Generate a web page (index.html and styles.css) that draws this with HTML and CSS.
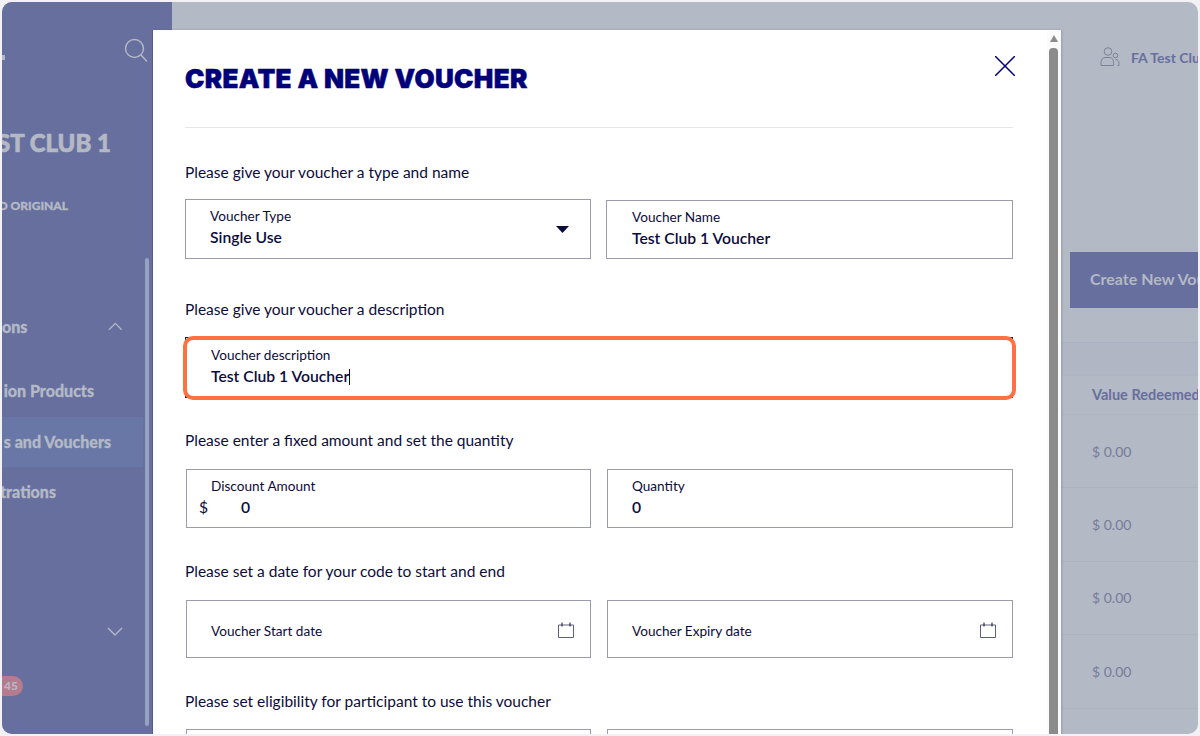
FILE: index.html
```html
<!DOCTYPE html>
<html lang="en">
<head>
<meta charset="utf-8">
<title>Create a new voucher</title>
<link rel="stylesheet" href="styles.css">
</head>
<body>
<div class="frame">
  <aside class="sidebar">
    <span class="logo-bit"></span>
    <div class="side-top">
      <svg class="search" viewBox="0 0 24 24" width="24" height="24" fill="none" stroke="#b3b9c5" stroke-width="1.4"><circle cx="10.500" cy="10.500" r="9"/><path d="M17 17l6 6.500"/></svg>
    </div>
    <div class="side-row club">ST CLUB 1</div>
    <div class="side-row plan">O ORIGINAL</div>
    <div class="side-row group"><span>ons</span>
      <svg class="chev" viewBox="0 0 16 9" width="16" height="9" fill="none" stroke="#b3b9c5" stroke-width="1.4"><path d="M1 8l7-7 7 7"/></svg>
    </div>
    <div class="side-row item prod">ion Products</div>
    <div class="side-row item active">s and Vouchers</div>
    <div class="side-row item reg">trations</div>
    <div class="side-row group lower">
      <svg class="chev" viewBox="0 0 16 9" width="16" height="9" fill="none" stroke="#b3b9c5" stroke-width="1.4"><path d="M1 1l7 7 7-7"/></svg>
    </div>
    <div class="side-row badge-row"><span class="badge">45</span></div>
    <div class="side-scroll"></div>
  </aside>

  <main class="main">
    <div class="topbar">
      <svg class="user" viewBox="0 0 20 20" width="20" height="20" fill="none" stroke="#7d8296" stroke-width="1"><circle cx="8" cy="4.500" r="3.800"/><circle cx="15.500" cy="8.500" r="2.300"/><path d="M1 18.500v-3c0-3 2-5 4-5h5c2 0 3.500 2 3.500 5v3z"/><path d="M15.500 12.500c2 0 3.500 1.500 3.500 3.500v2.500h-1.500"/></svg>
      <span class="user-name">FA Test Club 1</span>
    </div>
    <div class="actions"><button class="create">Create New Voucher</button></div>
    <div class="band"></div>
    <div class="thead">Value Redeemed</div>
    <div class="trow">$ 0.00</div>
    <div class="trow">$ 0.00</div>
    <div class="trow">$ 0.00</div>
    <div class="trow">$ 0.00</div>
  </main>

  <section class="modal">
    <div class="modal-body">
      <header class="modal-head">
        <h1 class="title">CREATE A NEW VOUCHER</h1>
        <svg class="close" viewBox="0 0 20 20" width="20" height="20" fill="none" stroke="#00007a" stroke-width="1.500"><path d="M0 0l20 20M20 0L0 20"/></svg>
      </header>

      <p class="label first">Please give your voucher a type and name</p>
      <div class="grid">
        <div class="field select">
          <span class="f-label">Voucher Type</span>
          <span class="f-value">Single Use</span>
          <svg class="arrow" viewBox="0 0 13 7" width="13" height="7"><path d="M0 0h13L6.500 7z" fill="#0c0c3c"/></svg>
        </div>
        <div class="field name">
          <span class="f-label">Voucher Name</span>
          <span class="f-value">Test Club 1 Voucher</span>
        </div>
      </div>

      <p class="label second">Please give your voucher a description</p>
      <div class="field focus">
        <span class="f-label">Voucher description</span>
        <span class="f-value">Test Club 1 Voucher<i class="caret"></i></span>
      </div>

      <p class="label third">Please enter a fixed amount and set the quantity</p>
      <div class="grid">
        <div class="field money">
          <span class="f-label">Discount Amount</span>
          <span class="f-value"><span class="dollar">$</span>0</span>
        </div>
        <div class="field">
          <span class="f-label">Quantity</span>
          <span class="f-value">0</span>
        </div>
      </div>

      <p class="label">Please set a date for your code to start and end</p>
      <div class="grid">
        <div class="field date">
          <span class="f-label">Voucher Start date</span>
          <svg class="cal" viewBox="0 0 16 16" width="16" height="16" fill="none" stroke="#5d6078"><path d="M.5 3h15v12.500H.5z"/><path d="M4 .5v4M12 .5v4" stroke="#0c0c3c"/></svg>
        </div>
        <div class="field date">
          <span class="f-label">Voucher Expiry date</span>
          <svg class="cal" viewBox="0 0 16 16" width="16" height="16" fill="none" stroke="#5d6078"><path d="M.5 3h15v12.500H.5z"/><path d="M4 .5v4M12 .5v4" stroke="#0c0c3c"/></svg>
        </div>
      </div>

      <p class="label last">Please set eligibility for participant to use this voucher</p>
      <div class="grid">
        <div class="field"></div>
        <div class="field"></div>
      </div>
    </div>
    <div class="scrollbar">
      <span class="sb-up"></span>
      <span class="sb-thumb"></span>
    </div>
  </section>
</div>
</body>
</html>
```

FILE: styles.css
```css
* { box-sizing: border-box; }
html, body { margin: 0; height: 100%; }
body {
  background: #f2f1f5;
  padding: 2px;
  font-family: "Lato", "Liberation Sans", sans-serif;
  color: #0c0c3c;
  overflow: hidden;
}
.frame {
  position: relative;
  display: flex;
  width: 1196px;
  height: 732px;
  border-radius: 10px;
  overflow: hidden;
  background: #b3b9c5;
}

/* sidebar */
.sidebar {
  position: relative;
  flex: 0 0 170px;
  background: #676f9f;
  color: #b3b9c5;
  font-weight: 900;
  overflow: hidden;
}
.logo-bit { position: absolute; left: 0; top: 53px; width: 2.500px; height: 5px; background: #b3b9c5; }
.side-top { display: flex; justify-content: flex-end; height: 105px; padding: 36px 24px 0 0; }
.side-row { display: flex; align-items: center; justify-content: flex-end; white-space: nowrap; }
.club { height: 70px; font-size: 24px; padding-right: 61px; -webkit-text-stroke: .7px #b3b9c5; }
.plan { height: 56px; font-size: 12px; padding-right: 104px; -webkit-text-stroke: .3px #b3b9c5; }
.group { height: 70px; margin-top: 58px; font-size: 16px; padding-right: 49px; gap: 81px; -webkit-text-stroke: .3px #b3b9c5; }
.item { height: 50px; font-size: 16px; -webkit-text-stroke: .3px #b3b9c5; }
.prod { margin-top: 5px; padding-right: 78px; padding-bottom: 1px; }
.active { margin-top: 1px; background: #6877a6; width: 141px; padding-right: 32px; padding-bottom: 2px; }
.reg { margin-top: -1px; width: 141px; padding-right: 87px; }
.lower { margin-top: 85px; padding-right: 49px; height: 60px; }
.badge-row { justify-content: flex-start; height: 50px; font-size: 12px; }
.badge { background: #b77b8e; color: #b3b9c5; border-radius: 0 11px 11px 0; padding: 2px 5px 2px 0; line-height: 16px; width: 21px; text-align: right; }
.side-scroll { position: absolute; left: 143px; top: 256px; width: 4px; height: 468px; border-radius: 2px; background: #98a1bf; }

/* main behind the modal */
.main { flex: 1; min-width: 0; padding-left: 889px; overflow: hidden; color: #676f9f; }
.topbar { display: flex; align-items: center; height: 110px; padding-left: 39px; gap: 11px; white-space: nowrap; }
.user { flex: none; }
.user-name { font-size: 14px; font-weight: 700; }
.actions { height: 196px; padding: 140px 0 0 9px; }
.create {
  display: block;
  width: 180px;
  height: 56px;
  border: 0;
  padding: 0 0 3px 20px;
  text-align: left;
  background: #676f9f;
  color: #b3b9c5;
  font: 700 16px "Lato", sans-serif;
  white-space: nowrap;
}
.band { height: 33px; margin-top: 34px; background: #b0b6c3; border-top: 1px solid #aab1bf; }
.thead { display: flex; align-items: center; height: 40px; padding: 0 0 2px 31px; font-size: 14.500px; font-weight: 700; white-space: nowrap; border-top: 1px solid #aeb4c1; border-bottom: 1px solid #aeb4c1; }
.trow { display: flex; align-items: center; height: 73.500px; padding-left: 31px; font-size: 14px; color: #767c9a; border-bottom: 1px solid #adb3c0; }
.thead + .trow { height: 73px; }

/* modal */
.modal {
  position: absolute;
  left: 151px;
  top: 28px;
  width: 908px;
  height: 720px;
  display: flex;
  background: #fff;
  box-shadow: -1px 0 0 #4f5a96, 1px 0 2px rgba(70,70,90,.25);
}
.modal-body { flex: 1; padding: 0 34px 0 32px; min-width: 0; }
.modal-head {
  display: flex;
  justify-content: space-between;
  align-items: flex-start;
  height: 98px;
  border-bottom: 1px solid #e6e6e9;
  padding-top: 26px;
}
.title { margin: 5px 0 0; font-family: "Inter", sans-serif; font-size: 26px; line-height: 36px; font-weight: 900; color: #00007a; letter-spacing: .35px; -webkit-text-stroke: .5px #00007a; }
.close { margin-right: -2px; }
.label { margin: 33px 0 19px; font-size: 15.500px; line-height: 20px; }
.label.first { margin: 34px 0 18px; }
.label.second { margin: 40px 0 18px; }
.label.third { margin-top: 32px; }
.label.last { margin-bottom: 18px; }
.grid { display: grid; grid-template-columns: 405px 406px; gap: 16px; margin-left: 1px; }
.field {
  position: relative;
  display: flex;
  flex-direction: column;
  justify-content: center;
  height: 59px;
  padding: 0 24px 2px;
  border: 1px solid #9a9cad;
  background: #fff;
}
.f-label { font-size: 13.600px; line-height: 19px; }
.f-value { font-size: 15.700px; line-height: 22px; font-weight: 600; }
.select { height: 60px; margin: -1px 0 0 -1px; padding-bottom: 4px; }
.name { margin-left: -1px; padding-left: 25px; }
.arrow { position: absolute; right: 21px; top: 26px; }
.focus { height: 61px; border-color: #1b1b2e; padding-left: 25px; padding-bottom: 3px; }
.focus::after { content: ""; position: absolute; inset: -2px -4px -3px -3px; border: 4px solid #ff7043; border-radius: 10px; }
.money .f-value { display: flex; }
.dollar { width: 42px; margin-left: -12px; font-weight: 400; }
.date { height: 58px; padding: 4px 24px 0; }
.cal { position: absolute; right: 16px; top: 21px; }
.caret { display: inline-block; width: 1px; height: 16px; background: #0c0c3c; vertical-align: -3px; }

.scrollbar { flex: 0 0 14px; position: relative; background: #fbfbfb; }
.sb-up { position: absolute; left: 3px; top: 5px; width: 0; height: 0; border-left: 4.500px solid transparent; border-right: 4.500px solid transparent; border-bottom: 7px solid #8b8b8b; }
.sb-thumb { position: absolute; left: 2px; top: 18px; width: 9px; height: 700px; border-radius: 4px 4px 0 0; background: #8b8b8b; }
```
